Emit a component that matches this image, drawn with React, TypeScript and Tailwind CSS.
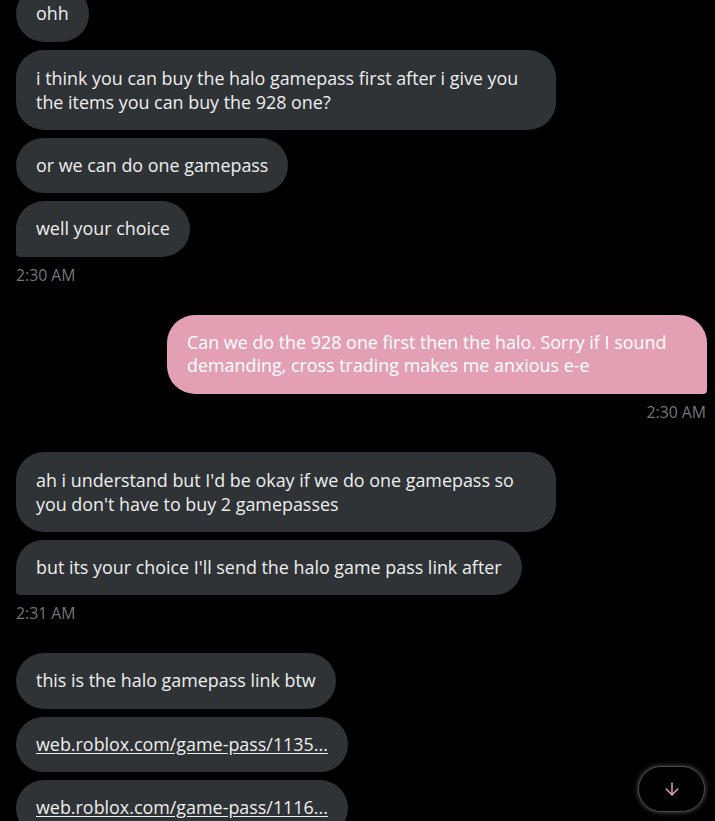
import { ArrowDown } from "lucide-react";

type Msg = { text: React.ReactNode; link?: boolean; last?: boolean; wide?: boolean };

const font = { fontFamily: '"Open Sans", "Noto Sans", sans-serif' };

const LeftBubble = ({ msg }: { msg: Msg }) => {
    return (
        <div className="flex justify-start">
            <div
                className={`bg-[#2f3336] text-[#eeeeee] px-5 py-4 text-[17.9px] whitespace-nowrap rounded-[28px] ${msg.wide ? "w-[540px] leading-6" : "leading-[23.5px]"} ${msg.last ? "rounded-bl-[4px]" : ""}`}
            >
                {msg.link ? <span className="underline underline-offset-2">{msg.text}</span> : msg.text}
            </div>
        </div>
    );
};

const Stamp = ({ time, right }: { time: string; right?: boolean }) => (
    <div className={`mt-2 text-[15.8px] leading-5 text-[#71767b] ${right ? "text-right pr-px" : ""}`}>{time}</div>
);

const App = () => {
    const group1: Msg[] = [
        { text: "ohh" },
        { text: <>i think you can buy the halo gamepass first after i give you<br />the items you can buy the 928 one?</>, wide: true },
        { text: "or we can do one gamepass" },
        { text: "well your choice", last: true },
    ];
    const group2: Msg[] = [
        { text: <>ah i understand but I'd be okay if we do one gamepass so<br />you don't have to buy 2 gamepasses</>, wide: true },
        { text: "but its your choice I'll send the halo game pass link after", last: true },
    ];
    const group3: Msg[] = [
        { text: "this is the halo gamepass link btw" },
        { text: "web.roblox.com/game-pass/1135...", link: true },
        { text: "web.roblox.com/game-pass/1116...", link: true },
    ];

    return (
        <div className="relative h-[821px] w-[715px] overflow-hidden bg-black" style={font}>
            <div className="-mt-[14px] pl-4 pr-2 flex flex-col">
                <div className="flex flex-col gap-2">
                    {group1.map((m, i) => <LeftBubble key={i} msg={m} />)}
                </div>
                <Stamp time="2:30 AM" />

                <div className="mt-[30px] flex justify-end">
                    <div className="w-[540px] bg-[#e3a0b5] text-white px-5 py-4 text-[17.9px] leading-[23.5px] whitespace-nowrap rounded-[28px] rounded-br-[4px]">
                        Can we do the 928 one first then the halo. Sorry if I sound<br />demanding, cross trading makes me anxious e-e
                    </div>
                </div>
                <Stamp time="2:30 AM" right />

                <div className="mt-[30px] flex flex-col gap-2">
                    {group2.map((m, i) => <LeftBubble key={i} msg={m} />)}
                </div>
                <Stamp time="2:31 AM" />

                <div className="mt-[30px] flex flex-col gap-2">
                    {group3.map((m, i) => <LeftBubble key={i} msg={m} />)}
                </div>
            </div>

            <button className="absolute left-[638px] top-[766px] w-[67px] h-[46px] rounded-full bg-black border border-[#4a4a4a] shadow-[0_0_4px_1px_rgba(255,255,255,0.25)] flex items-center justify-center">
                <ArrowDown size={20} strokeWidth={1.75} color="#e8a3b8" />
            </button>
        </div>
    );
};

export default App;
